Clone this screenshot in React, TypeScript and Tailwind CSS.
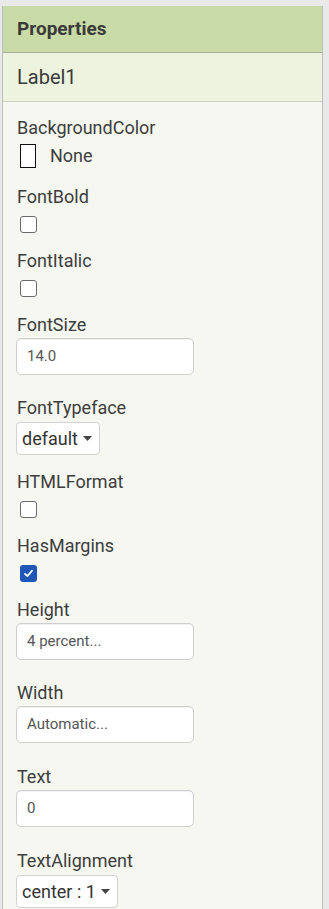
import React from "react";

const font = { fontFamily: "Roboto, 'Noto Sans', sans-serif" };

function PropLabel({ children }: { children: React.ReactNode }) {
  return <p className="text-[18px] leading-5 text-[#3d3d3d]">{children}</p>;
}

function CheckProp({ name, checked }: { name: string; checked?: boolean }) {
  return (
    <div className="pb-[18px]">
      <PropLabel>{name}</PropLabel>
      <div className="mt-[9px] pl-[3px]">
        {checked ? (
          <div className="w-[17px] h-[17px] rounded-[3px] bg-[#1f57b8] flex items-center justify-center">
            <svg width="11" height="11" viewBox="0 0 12 12" fill="none">
              <path d="M2.2 6.4 L4.8 8.9 L9.8 3" stroke="white" strokeWidth="2" strokeLinecap="round" strokeLinejoin="round" />
            </svg>
          </div>
        ) : (
          <div className="w-[17px] h-[17px] rounded-[3px] border-[1.5px] border-[#6b6b6b] bg-white" />
        )}
      </div>
    </div>
  );
}

function TextProp({ name, value, wide }: { name: string; value: string; wide?: boolean }) {
  return (
    <div className={wide ? "pb-[24px]" : "pb-[23px]"}>
      <PropLabel>{name}</PropLabel>
      <div className="mt-[3px] -ml-[1px] w-[178px] h-[37px] bg-white border border-[#cfcfcf] rounded-[5px] shadow-[inset_0_1px_1px_rgba(0,0,0,0.06)] flex items-center pl-[10px] text-[15px] text-[#555]">
        {value}
      </div>
    </div>
  );
}

function SelectProp({ name, value, last }: { name: string; value: string; last?: boolean }) {
  return (
    <div className={last ? "" : "pb-[17px]"}>
      <PropLabel>{name}</PropLabel>
      <div className="mt-[4px] -ml-[1px] inline-flex items-center h-[33px] bg-white border border-[#d2d2d2] rounded-[4px] pl-[5px] pr-[7px] text-[18px] text-[#333]">
        <span>{value}</span>
        <svg className="ml-[5px]" width="9" height="5" viewBox="0 0 9 5">
          <path d="M0 0 H9 L4.5 5 Z" fill="#444" />
        </svg>
      </div>
    </div>
  );
}

export default function App() {
  return (
    <div className="w-[329px] h-[909px] bg-[#e9e9e9] pt-[6px] pl-[2px] pr-[6px] overflow-hidden" style={font}>
      <div className="h-full border-x border-[#bdbdbd] bg-[#f5f7f0]">
        <div className="h-[47px] bg-[#c9dba6] border-b border-[#a9ad9f] flex items-center pl-[14px]">
          <span className="text-[19px] font-bold text-[#3a3a3a]">Properties</span>
        </div>
        <div className="h-[49px] bg-[#eef3df] border-b border-[#cdd0c6] flex items-center pl-[14px]">
          <span className="text-[20px] text-[#3a3a3a]">Label1</span>
        </div>
        <div className="pt-[16px] pl-[14px]">
          <div className="pb-[19px]">
            <PropLabel>BackgroundColor</PropLabel>
            <div className="mt-[6px] h-[24px] flex items-center pl-[3px]">
              <div className="w-[16px] h-[24px] border-[1.5px] border-[#111] bg-white" />
              <span className="ml-[14px] text-[18px] leading-6 text-[#3d3d3d]">None</span>
            </div>
          </div>
          <CheckProp name="FontBold" />
          <CheckProp name="FontItalic" />
          <TextProp name="FontSize" value="14.0" />
          <SelectProp name="FontTypeface" value="default" />
          <CheckProp name="HTMLFormat" />
          <CheckProp name="HasMargins" checked />
          <TextProp name="Height" value="4 percent..." />
          <TextProp name="Width" value="Automatic..." wide />
          <TextProp name="Text" value="0" wide />
          <SelectProp name="TextAlignment" value="center : 1" last />
        </div>
      </div>
    </div>
  );
}
